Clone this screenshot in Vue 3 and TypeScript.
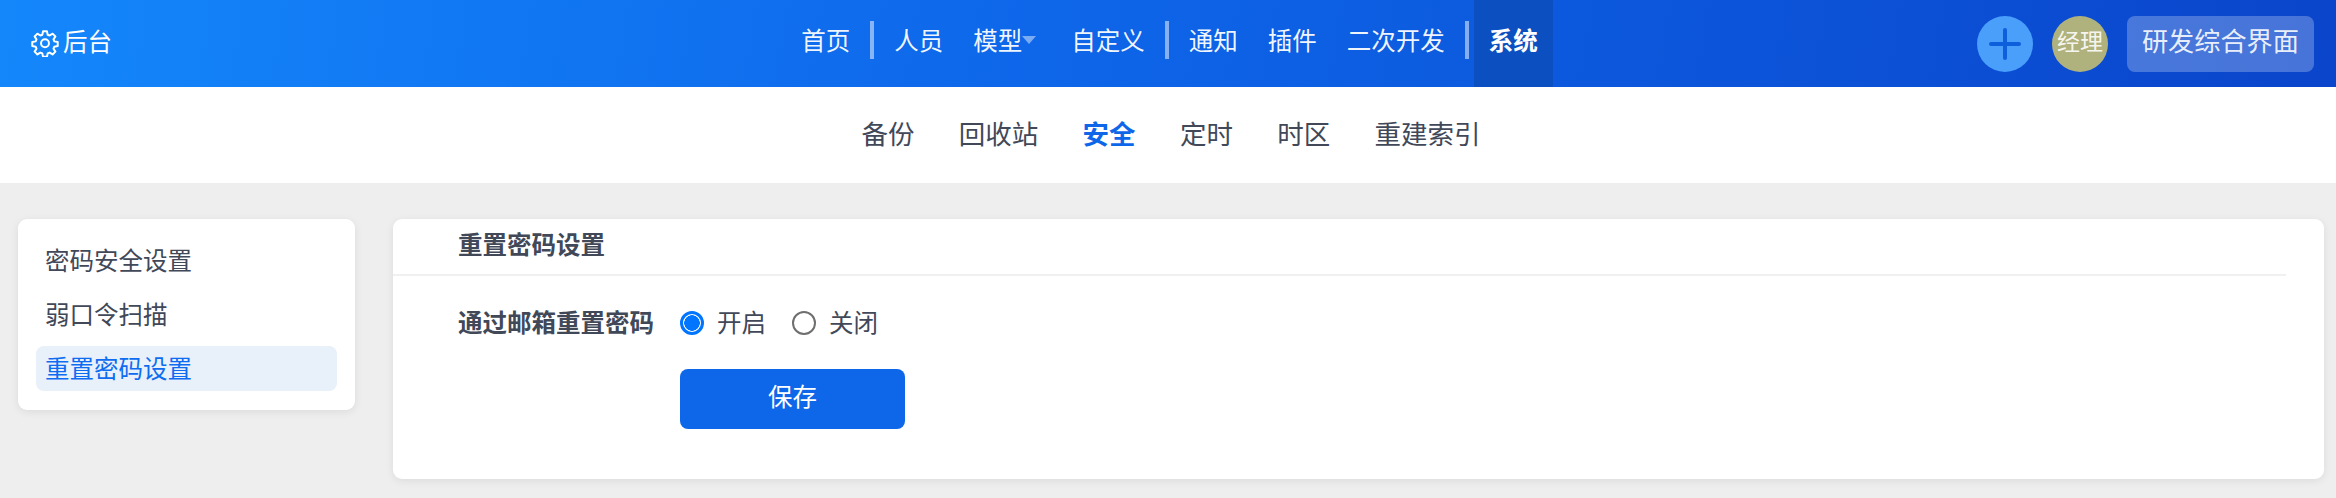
<script setup lang="ts">
interface NavItem { label: string; caret?: boolean; active?: boolean; sep?: boolean }
const nav: NavItem[] = [
  { label: '首页' },
  { label: '', sep: true },
  { label: '人员' },
  { label: '模型', caret: true },
  { label: '自定义' },
  { label: '', sep: true },
  { label: '通知' },
  { label: '插件' },
  { label: '二次开发' },
  { label: '', sep: true },
  { label: '系统', active: true },
]
const subnav = ['备份', '回收站', '安全', '定时', '时区', '重建索引']
const side = ['密码安全设置', '弱口令扫描', '重置密码设置']
</script>

<template>
  <div class="page">
    <header class="top">
      <div class="brand">
        <svg class="gear" viewBox="0 0 24 24" fill="none" stroke="#fff" stroke-width="1.7" stroke-linejoin="round">
          <path d="M10.3 2h3.4l.6 2.9 1.7.7 2.5-1.6 2.4 2.4-1.6 2.5.7 1.7 2.9.6v3.4l-2.9.6-.7 1.7 1.6 2.5-2.4 2.4-2.5-1.6-1.7.7-.6 2.9h-3.4l-.6-2.9-1.7-.7-2.5 1.6-2.4-2.4 1.6-2.5-.7-1.7-2.9-.6v-3.4l2.9-.6.7-1.7-1.6-2.5 2.4-2.4 2.5 1.6 1.7-.7z" />
          <circle cx="12" cy="12.2" r="3.4" />
        </svg>
        <span>后台</span>
      </div>
      <nav class="menu">
        <template v-for="(item, i) in nav" :key="i">
          <i v-if="item.sep" class="sep"></i>
          <a v-else class="menu-item" :class="{ active: item.active, 'has-caret': item.caret }">
            {{ item.label }}<i v-if="item.caret" class="caret"></i>
          </a>
        </template>
      </nav>
      <div class="actions">
        <svg class="plus" viewBox="0 0 56 56">
          <circle cx="28" cy="28" r="28" fill="#4a9ffb" />
          <path d="M14 28h28M28 14v28" stroke="#0e5fdc" stroke-width="4" stroke-linecap="round" />
        </svg>
        <span class="avatar">经理</span>
        <span class="workspace">研发综合界面</span>
      </div>
    </header>

    <div class="subnav">
      <a v-for="s in subnav" :key="s" :class="{ on: s === '安全' }">{{ s }}</a>
    </div>

    <main class="body">
      <aside class="side">
        <a v-for="s in side" :key="s" :class="{ on: s === '重置密码设置' }">{{ s }}</a>
      </aside>
      <section class="panel">
        <h3 class="title">重置密码设置</h3>
        <div class="row">
          <span class="label">通过邮箱重置密码</span>
          <label class="radio"><input type="radio" name="reset" checked /><span>开启</span></label>
          <label class="radio"><input type="radio" name="reset" /><span>关闭</span></label>
        </div>
        <button class="save" type="button">保存</button>
      </section>
    </main>
  </div>
</template>

<style>
html, body { margin: 0; background: #eeeeee; }
</style>

<style scoped>
.page {
  height: 498px;
  overflow: hidden;
  background: #eeeeee;
  font-family: "Noto Sans CJK SC", "Liberation Sans", sans-serif;
  color: #414858;
}
.top {
  height: 87px;
  display: grid;
  grid-template-columns: 1fr auto 1fr;
  align-items: stretch;
  background: linear-gradient(100deg, #1487fb 0%, #0e66e9 45%, #0a45cb 100%);
  color: #fff;
}
.brand {
  display: flex;
  align-items: center;
  padding: 0 0 6px 31px;
  gap: 4px;
  font-size: 24.5px;
}
.gear { width: 28px; height: 28px; margin-top: 5px; }
.menu { display: flex; align-items: stretch; font-size: 24.5px; margin-left: 3px; }
.menu-item {
  display: flex;
  align-items: center;
  padding: 0 15px 9px;
  position: relative;
  color: rgba(255, 255, 255, 0.95);
}
.menu-item.has-caret { padding-right: 34px; }
.menu-item.active {
  background: #0b4fc0;
  font-weight: 700;
  color: #fff;
}
.sep {
  align-self: flex-start;
  width: 4px;
  height: 38px;
  margin: 21px 5px 0;
  background: rgba(255, 255, 255, 0.5);
}
.caret {
  position: absolute;
  right: 20px;
  top: 36px;
  border-left: 7px solid transparent;
  border-right: 7px solid transparent;
  border-top: 8px solid rgba(255, 255, 255, 0.45);
}
.actions {
  display: flex;
  align-items: center;
  justify-content: flex-end;
  padding-right: 22px;
}
.plus {
  width: 56px;
  height: 56px;
  margin-top: 1px;
}
.avatar {
  width: 56px;
  height: 56px;
  margin-left: 19px;
  border-radius: 50%;
  background: #b0b27d;
  font-size: 23px;
  line-height: 49px;
  text-align: center;
  white-space: nowrap;
  color: rgba(255, 255, 255, 0.9);
}
.workspace {
  height: 56px;
  line-height: 48px;
  margin-left: 19px;
  padding: 0 15px;
  border-radius: 8px;
  background: rgba(255, 255, 255, 0.25);
  font-size: 26.2px;
  color: rgba(255, 255, 255, 0.9);
}
.subnav {
  height: 96px;
  background: #fff;
  display: flex;
  align-items: center;
  justify-content: center;
  gap: 44.3px;
  font-size: 26.5px;
  padding: 0 0 5px 6px;
  box-sizing: border-box;
}
.subnav .on { color: #0e66e9; font-weight: 700; }
.body {
  display: flex;
  align-items: flex-start;
  gap: 38px;
  padding: 36px 12px 0 18px;
}
.side {
  flex: 0 0 337px;
  box-sizing: border-box;
  padding: 19px 18px 19px;
  background: #fff;
  border-radius: 9px;
  box-shadow: 0 2px 8px rgba(0, 0, 0, 0.08);
  font-size: 24.5px;
  display: flex;
  flex-direction: column;
  gap: 9px;
}
.side a {
  height: 45px;
  line-height: 44px;
  padding-left: 9px;
  border-radius: 8px;
}
.side a.on { background: #e8f0fa; color: #0e6cf0; }
.panel {
  flex: 1;
  height: 260px;
  box-sizing: border-box;
  padding-right: 38px;
  background: #fff;
  border-radius: 9px;
  box-shadow: 0 2px 8px rgba(0, 0, 0, 0.08);
  font-size: 24.5px;
}
.title {
  margin: 0;
  height: 55px;
  line-height: 50px;
  padding-left: 65px;
  border-bottom: 2px solid #f0f0f0;
  font-size: 24.5px;
  font-weight: 700;
}
.row {
  display: flex;
  align-items: center;
  height: 34px;
  margin-top: 30px;
  padding-left: 65px;
}
.label { width: 222px; font-weight: 700; padding-bottom: 3px; }
.radio {
  display: flex;
  align-items: center;
  gap: 13px;
  margin-right: 26px;
}
.radio span { padding-bottom: 3px; }
.radio input {
  appearance: none;
  box-sizing: border-box;
  width: 24px;
  height: 24px;
  margin: 0;
  border: 2px solid #6f6f6f;
  border-radius: 50%;
  background: #fff;
}
.radio input:checked {
  border: 3px solid #0075ff;
  background: radial-gradient(circle, #0075ff 0 7.5px, #fff 8px);
}
.save {
  display: block;
  width: 225px;
  height: 60px;
  margin: 29px 0 0 287px;
  padding: 0 0 7px;
  border: 0;
  border-radius: 8px;
  background: #0e66e9;
  color: #fff;
  font: inherit;
}
</style>
